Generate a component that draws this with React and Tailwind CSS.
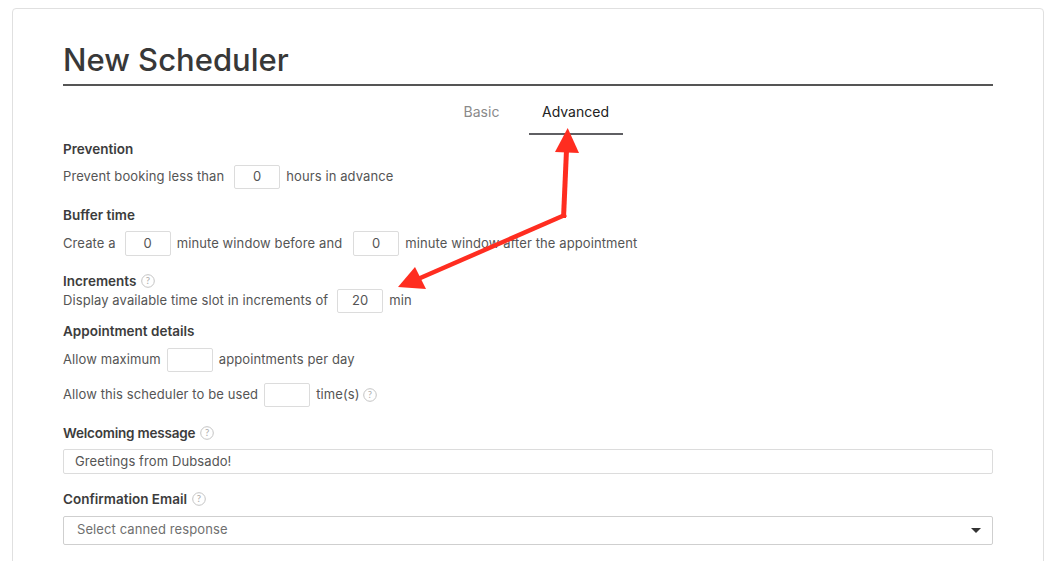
const font = { fontFamily: "Inter, 'Open Sans', sans-serif" };

const Help = ({ className = "ml-[5px]" }) => (
  <svg width="14" height="14" viewBox="0 0 14 14" className={`shrink-0 ${className}`}>
    <circle cx="7" cy="7" r="6.3" fill="none" stroke="#c4c4c4" strokeWidth="1" />
    <text x="7" y="10.4" textAnchor="middle" fontSize="9.5" fill="#b0b0b0" fontFamily="Lato, sans-serif">?</text>
  </svg>
);

const Label = ({ children, help, className = "" }) => (
  <div className={`flex items-center h-4 text-[13.5px] font-semibold text-[#3c3c3c] ${className}`}>
    {children}
    {help && <Help />}
  </div>
);

const Num = ({ value, className = "ml-[9px] mr-[6px] h-6" }) => (
  <div className={`w-[46px] flex items-center justify-center border border-[#dcdcdc] rounded-[2px] bg-white ${className}`}>
    {value}
  </div>
);

const Row = ({ children, className = "h-6" }) => (
  <div className={`flex items-center text-[13px] tracking-[0.1px] text-[#555] ${className}`}>{children}</div>
);

export default function App() {
  return (
    <div className="relative w-[1052px] h-[561px] overflow-hidden bg-white" style={font}>
      <div className="ml-3 mt-2 w-[1032px] h-[600px] border border-[#e0e0e0] rounded-[4px] px-[50px]">
        <div className="pt-[33px] pb-[6px] border-b-2 border-[#555]">
          <h1 className="text-[31px] leading-9 font-medium text-[#383838]">New Scheduler</h1>
        </div>

        {/* Tabs */}
        <div className="flex justify-center text-[14px] ml-[1px]">
          <div className="h-[49px] w-[94px] pt-[15px] text-center text-[#8a8a8a]">Basic</div>
          <div className="h-[49px] w-[94px] pt-[15px] text-center text-[#222] border-b-2 border-[#5f5f63]">Advanced</div>
        </div>

        <Label className="mt-[6px]">Prevention</Label>
        <Row className="mt-2 h-6">
          Prevent booking less than <Num value="0" className="ml-[10px] mr-[6px] h-6" /> hours in advance
        </Row>

        <Label className="mt-[18px]">Buffer time</Label>
        <Row className="mt-2 h-[25px]">
          Create a <Num value="0" className="ml-[9px] mr-[6px] h-[25px]" /> minute window before and <Num value="0" className="ml-[11px] mr-[6px] h-[25px]" /> minute window after the appointment
        </Row>

        <Label className="mt-[17px]" help>Increments</Label>
        <Row className="h-6">
          Display available time slot in increments of <Num value="20" /> min
        </Row>

        <Label className="mt-[10px]">Appointment details</Label>
        <Row className="mt-[9px] h-6">
          Allow maximum <Num className="ml-[6px] mr-[6px] h-6" /> appointments per day
        </Row>
        <Row className="mt-[11px] h-6">
          Allow this scheduler to be used <Num className="ml-[6px] mr-[6px] h-6" /> time(s) <Help className="ml-[3px]" />
        </Row>

        <Label className="mt-[18px] tracking-[-0.2px]" help>Welcoming message</Label>
        <div className="mt-2 h-[25px] flex items-center pl-[11px] border border-[#dcdcdc] rounded-[2px] text-[13px] tracking-[0.1px] text-[#555]">
          Greetings from Dubsado!
        </div>

        <Label className="mt-[17px]" help>Confirmation Email</Label>
        <div className="mt-[9px] h-[29px] flex items-center justify-between pl-[13px] pr-[11px] border border-[#cfcfcf] rounded-[2px] text-[13px] tracking-[0.1px] text-[#6f6f6f]">
          <span className="-mt-[2px]">Select canned response</span>
          <svg width="10" height="5" viewBox="0 0 10 5"><path d="M0 0h10L5 5z" fill="#333" /></svg>
        </div>
      </div>

      {/* Annotation arrows */}
      <svg className="absolute inset-0 pointer-events-none" width="1052" height="561">
        <path d="M563.5 218 L566.5 150" stroke="#ff2d20" strokeWidth="5" fill="none" />
        <path d="M567.7 128 L555 152 L579 153 Z" fill="#ff2d20" />
        <path d="M566 214.5 L418 279" stroke="#ff2d20" strokeWidth="4.5" fill="none" />
        <path d="M398 287 L415 267 L426 289 Z" fill="#ff2d20" />
      </svg>
    </div>
  );
}
